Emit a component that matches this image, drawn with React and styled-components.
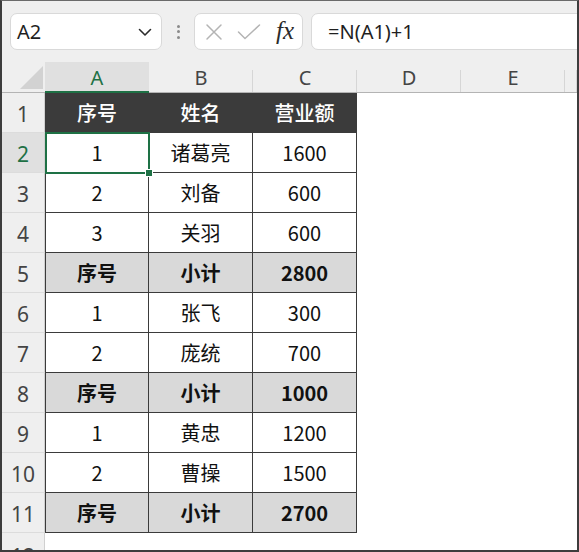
import React from 'react'
import styled, { createGlobalStyle, css } from 'styled-components'

const GlobalStyle = createGlobalStyle`
  html, body {
    margin: 0;
    padding: 0;
    background: #ffffff;
  }
  body {
    font-family: "Noto Sans", "Noto Sans CJK SC", sans-serif;
    overflow: hidden;
  }
`;

const Frame = styled.div`
  box-sizing: border-box;
  width: 579px;
  height: 552px;
  border: 2px solid #3d3d3d;
  border-top: 1px solid #6a6a6a;
  background: #ffffff;
  display: flex;
  flex-direction: column;
  overflow: hidden;
`;

const Toolbar = styled.div`
  height: 61px;
  flex: none;
  display: flex;
  align-items: center;
  padding-left: 8px;
  background: #efefef;
`;

const Box = styled.div`
  box-sizing: border-box;
  height: 37px;
  background: #ffffff;
  border: 1px solid #d9d9d9;
  border-radius: 7px;
  display: flex;
  align-items: center;
`;

const NameBox = styled(Box)`
  width: 152px;
  justify-content: space-between;
  padding: 0 7px 0 6px;
  font-size: 20px;
  color: #1f1f1f;
`;

const Dots = styled.div`
  width: 32px;
  display: flex;
  flex-direction: column;
  align-items: center;
  gap: 2.5px;

  & > span {
    width: 3px;
    height: 3px;
    border-radius: 50%;
    background: #8a8a8a;
  }
`;

const FuncBox = styled(Box)`
  width: 109px;
  padding: 0 6px 0 10px;
  gap: 14px;
`;

const Fx = styled.span`
  font-family: "Liberation Serif", "DejaVu Serif", serif;
  font-style: italic;
  font-weight: 400;
  font-size: 25px;
  line-height: 1;
  color: #2b2b2b;
  margin-left: 1px;
  margin-top: -3px;
`;

const FormulaBox = styled(Box)`
  flex: 1;
  margin-left: 8px;
  margin-right: -12px;
  padding-left: 16px;
  font-size: 20px;
  color: #1f1f1f;
`;

const Sheet = styled.div`
  display: grid;
  grid-template-columns: 43px repeat(5, 104px) 1fr;
  grid-template-rows: 31px repeat(12, 40px);
  font-family: "Noto Sans CJK SC", "Noto Sans", sans-serif;
`;

const HeaderBase = css`
  box-sizing: border-box;
  display: flex;
  align-items: center;
  justify-content: center;
  font-family: "Noto Sans", "Noto Sans CJK SC", sans-serif;
  font-size: 20px;
`;

const Corner = styled.div`
  ${HeaderBase};
  background: #efefef;
  border-bottom: 1px solid #b4b4b4;
  align-items: flex-end;
  justify-content: flex-end;
  padding: 0 2px 3px 0;

  & > span {
    width: 0;
    height: 0;
    border-left: 23px solid transparent;
    border-bottom: 23px solid #d2d2d2;
  }
`;

const ColHeader = styled.div`
  ${HeaderBase};
  color: ${p => (p.$active ? '#1e7145' : '#444444')};
  background: ${p =>
    p.$active
      ? '#e0e0e0'
      : 'linear-gradient(#d6d6d6, #d6d6d6) right bottom / 1px 22px no-repeat, #efefef'};
  border-bottom: ${p => (p.$active ? '2px solid #1e7145' : '1px solid #b4b4b4')};
  padding-top: ${p => (p.$active ? '1px' : '0')};
`;

const RowHeader = styled.div`
  ${HeaderBase};
  font-size: 21px;
  color: ${p => (p.$active ? '#1e7145' : '#444444')};
  background: ${p => (p.$active ? '#e0e0e0' : '#efefef')};
  border-bottom: 1px solid #dcdcdc;
  border-right: 1px solid #d0d0d0;
  padding-top: 2px;
  ${p => p.$cut && css`align-items: flex-start; padding-top: 9px;`}
`;

const variants = {
  head: css`
    background: #3b3b3b;
    color: #ffffff;
    font-weight: 500;
  `,
  body: css`
    background: #ffffff;
    color: #111111;
  `,
  total: css`
    background: #d9d9d9;
    color: #111111;
    font-weight: 700;
  `,
};

const Cell = styled.div`
  box-sizing: border-box;
  position: relative;
  display: flex;
  align-items: center;
  justify-content: center;
  font-size: 20px;
  border-right: 1px solid #3b3b3b;
  border-bottom: 1px solid #3b3b3b;
  ${p => p.$first && css`border-left: 1px solid #3b3b3b;`}
  ${p => variants[p.$variant]};
`;

const EmptyCell = styled.div`
  background: #ffffff;
`;

const Selection = styled.span`
  position: absolute;
  z-index: 2;
  inset: -1px -2px -2px -1px;
  border: 2px solid #1e7145;
  pointer-events: none;
`;

const FillHandle = styled.span`
  position: absolute;
  right: -5px;
  bottom: -5px;
  width: 6px;
  height: 6px;
  background: #1e7145;
  border: 1px solid #ffffff;
`;

const rows = [
  { type: 'head', cells: ['序号', '姓名', '营业额'] },
  { type: 'body', cells: ['1', '诸葛亮', '1600'] },
  { type: 'body', cells: ['2', '刘备', '600'] },
  { type: 'body', cells: ['3', '关羽', '600'] },
  { type: 'total', cells: ['序号', '小计', '2800'] },
  { type: 'body', cells: ['1', '张飞', '300'] },
  { type: 'body', cells: ['2', '庞统', '700'] },
  { type: 'total', cells: ['序号', '小计', '1000'] },
  { type: 'body', cells: ['1', '黄忠', '1200'] },
  { type: 'body', cells: ['2', '曹操', '1500'] },
  { type: 'total', cells: ['序号', '小计', '2700'] },
];

const columns = ['A', 'B', 'C', 'D', 'E', ''];

const Chevron = () => (
  <svg width="18" height="18" viewBox="0 0 18 18" fill="none">
    <polyline points="3.5,6.5 9,12 14.5,6.5" stroke="#2b2b2b" strokeWidth="1.6" strokeLinecap="round" strokeLinejoin="round" />
  </svg>
);

const Cross = () => (
  <svg width="18" height="18" viewBox="0 0 18 18" fill="none">
    <path d="M2 2 L16 16 M16 2 L2 16" stroke="#b4b4b4" strokeWidth="1.5" strokeLinecap="round" />
  </svg>
);

const Check = () => (
  <svg width="24" height="18" viewBox="0 0 24 18" fill="none">
    <polyline points="1.5,9 8,15.5 22.5,2" stroke="#b4b4b4" strokeWidth="1.5" strokeLinecap="round" strokeLinejoin="round" />
  </svg>
);

export default function App() {
  return (
    <>
      <GlobalStyle />
      <Frame>
        <Toolbar>
          <NameBox>
            <span>A2</span>
            <Chevron />
          </NameBox>
          <Dots>
            <span />
            <span />
            <span />
          </Dots>
          <FuncBox>
            <Cross />
            <Check />
            <Fx>fx</Fx>
          </FuncBox>
          <FormulaBox>=N(A1)+1</FormulaBox>
        </Toolbar>

        <Sheet>
          <Corner><span /></Corner>
          {columns.map((c, i) => (
            <ColHeader key={i} $active={c === 'A'}>{c}</ColHeader>
          ))}

          {rows.map((row, r) => (
            <React.Fragment key={r}>
              <RowHeader $active={r === 1}>{r + 1}</RowHeader>
              {row.cells.map((text, c) => (
                <Cell key={c} $variant={row.type} $first={c === 0}>
                  {text}
                  {r === 1 && c === 0 && (
                    <Selection>
                      <FillHandle />
                    </Selection>
                  )}
                </Cell>
              ))}
              <EmptyCell />
              <EmptyCell />
              <EmptyCell />
            </React.Fragment>
          ))}

          <RowHeader $cut>12</RowHeader>
          <EmptyCell />
          <EmptyCell />
          <EmptyCell />
          <EmptyCell />
          <EmptyCell />
          <EmptyCell />
        </Sheet>
      </Frame>
    </>
  )
}
